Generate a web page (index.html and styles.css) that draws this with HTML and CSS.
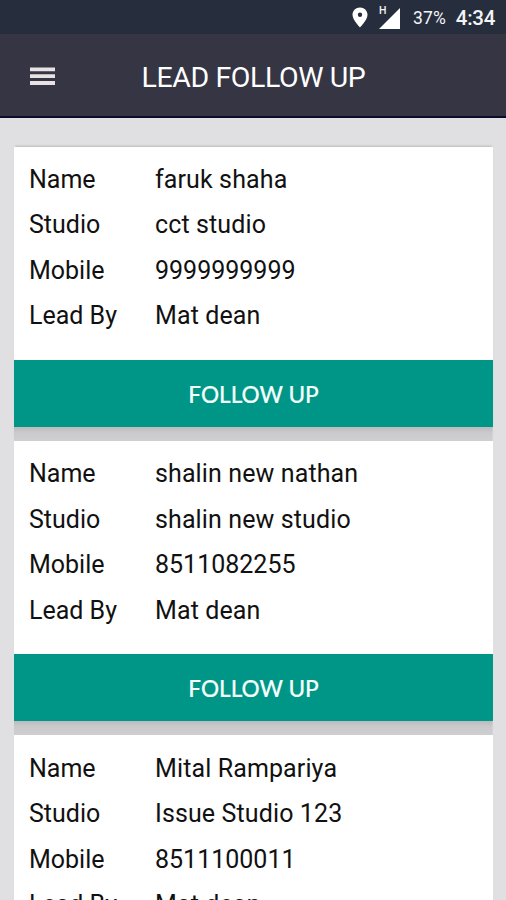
FILE: index.html
```html
<!DOCTYPE html>
<html lang="en">
<head>
<meta charset="utf-8">
<title>Lead Follow Up</title>
<link rel="stylesheet" href="styles.css">
</head>
<body>
<div class="status">
  <svg class="pin" width="16" height="21" viewBox="0 0 16 21"><path fill="#fff" fill-rule="evenodd" d="M8 .5C3.800.5.5 3.700.5 7.800.5 13 8 20.500 8 20.500S15.500 13 15.500 7.800C15.500 3.700 12.200.5 8 .5zM8 5.500a2.200 2.200 0 1 1 0 4.400 2.200 2.200 0 0 1 0-4.400z"/></svg>
  <div class="signal"><span class="net">H</span><svg width="21" height="21" viewBox="0 0 21 21"><path fill="#fff" d="M21 0v21H0z"/></svg></div>
  <span class="battery">37%</span>
  <span class="clock">4:34</span>
</div>
<header class="bar">
  <svg class="menu" width="25" height="19" viewBox="0 0 25 19"><path fill="#e8e2e4" d="M0 .5h25v3.800H0zM0 7.300h25v3.800H0zM0 14.100h25v3.800H0z"/></svg>
  <h1 class="title">LEAD FOLLOW UP</h1>
</header>
<main class="list">
  <section class="card">
    <dl class="fields">
      <dt>Name</dt><dd>faruk shaha</dd>
      <dt>Studio</dt><dd>cct studio</dd>
      <dt>Mobile</dt><dd class="number">9999999999</dd>
      <dt>Lead By</dt><dd>Mat dean</dd>
    </dl>
    <button class="follow">FOLLOW UP</button>
  </section>
  <section class="card">
    <dl class="fields">
      <dt>Name</dt><dd>shalin new nathan</dd>
      <dt>Studio</dt><dd>shalin new studio</dd>
      <dt>Mobile</dt><dd class="number">8511082255</dd>
      <dt>Lead By</dt><dd>Mat dean</dd>
    </dl>
    <button class="follow">FOLLOW UP</button>
  </section>
  <section class="card">
    <dl class="fields">
      <dt>Name</dt><dd>Mital Rampariya</dd>
      <dt>Studio</dt><dd>Issue Studio 123</dd>
      <dt>Mobile</dt><dd class="number">8511100011</dd>
      <dt>Lead By</dt><dd>Mat dean</dd>
    </dl>
    <button class="follow">FOLLOW UP</button>
  </section>
</main>
</body>
</html>
```
FILE: styles.css
```css
* { box-sizing: border-box; }
body {
  margin: 0;
  height: 900px;
  overflow: hidden;
  background: #e0e0e2;
  font-family: Roboto, sans-serif;
  color: #111;
}
.status {
  height: 34px;
  padding: 2px 11px 0 0;
  background: #262e3e;
  color: #f4f4f6;
  display: flex;
  align-items: center;
  justify-content: flex-end;
}
.pin { margin: 0 11px 2px 0; }
.signal {
  position: relative;
  width: 21px;
  height: 21px;
  margin: 0 13px 0 0;
}
.signal svg { display: block; }
.net {
  position: absolute;
  left: 0;
  top: -2px;
  font-size: 10.5px;
  line-height: 10px;
  font-weight: 500;
}
.battery {
  font-size: 17.5px;
  margin-right: 10px;
  letter-spacing: 0.1px;
}
.clock {
  font-size: 20.5px;
  font-weight: 500;
  letter-spacing: -0.3px;
}
.bar {
  height: 84px;
  padding: 0 30px;
  background: #353544;
  border-bottom: 2px solid #0d0b2b;
  display: flex;
  align-items: center;
}
.title {
  margin: 5px 0 0 86.500px;
  font-size: 28.5px;
  line-height: 34px;
  font-weight: 400;
  letter-spacing: -0.4px;
  color: #fff;
  white-space: nowrap;
}
.menu { margin-top: 2px; }
.list {
  padding: 28.500px 13.400px 0 14.400px;
  display: flex;
  flex-direction: column;
}
.card {
  flex: none;
  height: 294.400px;
  background: linear-gradient(#b9b9bb, #cbcbcd 7px, #cfcfd1) bottom / 100% 15px no-repeat;
}
.card:first-child { box-shadow: 0 -2px 2px -1px #bbb; }
.fields {
  margin: 0;
  height: 213px;
  padding: 10.400px 14.600px 0;
  background: #fff;
  display: grid;
  grid-template-columns: 126px 1fr;
  grid-auto-rows: 45.500px;
  align-content: start;
  font-size: 25px;
  line-height: 45.500px;
}
.fields dd {
  margin: 0;
  letter-spacing: 0.12px;
}
.fields .number { letter-spacing: 0; }
.follow {
  display: block;
  width: 100%;
  height: 67px;
  padding: 3px 0 0;
  border: 0;
  background: #009687;
  color: #f5fffc;
  font: 500 22.600px Lato, sans-serif;
  -webkit-text-stroke: 0.15px #f5fffc;
}
```
